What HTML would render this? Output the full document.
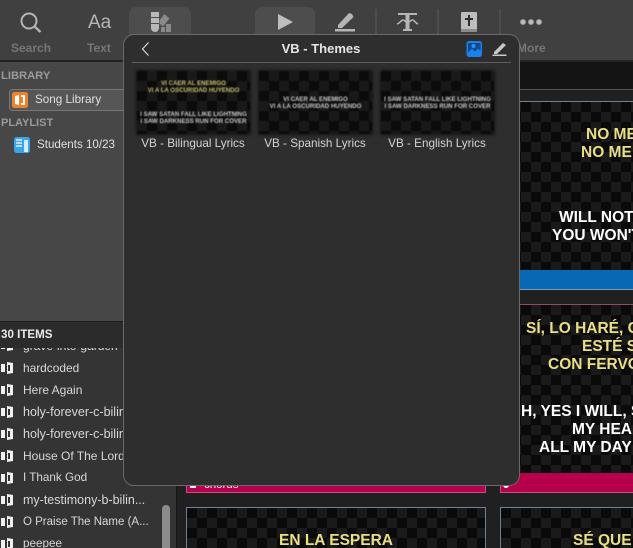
<!DOCTYPE html>
<html><head><meta charset="utf-8"><style>
*{box-sizing:border-box}
html,body{margin:0;padding:0;overflow:hidden}
body{width:633px;height:548px;overflow:hidden;background:#1e1e1e;position:relative;font-family:"Liberation Sans",sans-serif}
.a{position:absolute}
.t{position:absolute;white-space:nowrap}
.tb{font-size:12px;font-weight:bold;color:#767676;top:41px;line-height:15px}
.li{position:absolute;left:23px;font-size:12px;color:#d8d8d8;line-height:16px;white-space:nowrap}
.ck{position:absolute;background-color:#0a0a0a;background-image:conic-gradient(#1a1a1a 25%,#0a0a0a 0 50%,#1a1a1a 0 75%,#0a0a0a 0);background-size:20px 20px}
.s{position:absolute;white-space:nowrap;font-weight:bold;font-size:15.5px;line-height:18px}
.y{color:#ebdf85}.w{color:#fff}
.th{position:absolute;top:71px;width:113px;height:63px;box-shadow:0 0 3px 1px rgba(0,0,0,.55);background-color:#0b0b0b;background-image:conic-gradient(#191919 25%,#0b0b0b 0 50%,#191919 0 75%,#0b0b0b 0);background-size:20px 20px;overflow:hidden;filter:blur(.45px)}
.tt{position:absolute;left:0;width:113px;text-align:center;font-size:6.1px;line-height:7px;font-weight:bold;white-space:nowrap}
.lb{position:absolute;top:136px;width:130px;text-align:center;font-size:11.7px;line-height:16px;color:#d4d4d4;white-space:nowrap}
</style></head><body>

<!-- toolbar -->
<div class="a" style="left:0;top:0;width:633px;height:62px;background:#404040;border-bottom:2px solid #232323"></div>
<div class="a" style="left:129px;top:7px;width:62px;height:30px;background:#4d4d4d;border-radius:7px 7px 0 0"></div>
<div class="a" style="left:255px;top:7px;width:60px;height:30px;background:#4d4d4d;border-radius:7px 7px 0 0"></div>
<svg class="a" style="left:0;top:0" width="633" height="62">
 <g fill="none" stroke="#b5b5b5" stroke-width="2"><circle cx="29" cy="21" r="7.5"/><path d="M34.5 26.5L40.5 32" stroke-width="2.4"/></g>
 <g fill="#b8b8b8">
  <rect x="151" y="12" width="8" height="5"/><rect x="151" y="18" width="8" height="5"/><path d="M151 24h8v4a4 4 0 0 1-8 0z"/>
  <path d="M164.5 14l5 4.5-6.500 8-3.500-3v-3z" fill="#8a8a8a"/><rect x="166" y="24" width="5" height="8" fill="#8a8a8a"/><rect x="161" y="27" width="4" height="5" fill="#8a8a8a"/>
  <path d="M278 14l15 8-15 8z" fill="#bdbdbd"/>
  <path d="M338 25l11-12 3 1 1.500 3-11.500 11h-4z" fill="#b5b5b5"/><rect x="335" y="29" width="20" height="2.500" fill="#b5b5b5"/>
  <rect x="461" y="12" width="16" height="20" rx="1" fill="#bdbdbd"/><rect x="461" y="29" width="16" height="3" fill="#8d8d8d"/>
  <path d="M468 15h2v3h3v2h-3v6h-2v-6h-3v-2h3z" fill="#2e2e2e"/>
  <circle cx="523" cy="22" r="2.8"/><circle cx="531" cy="22" r="2.8"/><circle cx="539" cy="22" r="2.8"/>
 </g>
 <g fill="#b5b5b5"><rect x="398" y="13" width="19" height="2"/><rect x="405.500" y="13" width="4" height="18"/><rect x="403" y="29" width="9" height="2"/></g>
 <path d="M397 24c3-.5 4-4 6-4s3 3 4.500 3 3-3 5-3 3 3.500 5.500 4" fill="none" stroke="#b5b5b5" stroke-width="1.500"/>
 <g fill="#4e4e4e"><rect x="375" y="9" width="2" height="26"/><rect x="437" y="9" width="2" height="26"/><rect x="499" y="9" width="2" height="26"/></g>
</svg>
<div class="t" style="left:88px;top:12px;font-size:19px;color:#b5b5b5;line-height:22px">Aa</div>
<div class="t tb" style="left:11px">Search</div>
<div class="t tb" style="left:87px">Text</div>
<div class="t tb" style="left:517px">More</div>

<!-- sidebar -->
<div class="a" style="left:0;top:62px;width:176px;height:260px;background:#474747"></div>
<div class="t" style="left:1px;top:69px;font-size:11.200px;font-weight:bold;color:#9a9a9a;line-height:15px">LIBRARY</div>
<div class="a" style="left:9px;top:89px;width:130px;height:22px;background:#565656;border:1px solid #777;border-radius:3px"></div>
<svg class="a" style="left:12px;top:92px" width="17" height="17"><rect width="16" height="16" rx="2.500" fill="#f0822a"/><path d="M3 4l4-1v10l-4-1zM9 3h4v10H9z" fill="#fff"/><rect x="9" y="5" width="2" height="6" fill="#f0822a"/></svg>
<div class="t" style="left:35px;top:92px;font-size:11.700px;color:#e0e0e0;line-height:16px">Song Library</div>
<div class="t" style="left:1px;top:116px;font-size:11px;font-weight:bold;color:#9a9a9a;line-height:15px">PLAYLIST</div>
<svg class="a" style="left:14px;top:137px" width="17" height="17"><rect width="16" height="16" rx="2.500" fill="#3ba4ee"/><path d="M2 3h6M2 6h6M2 9h6" stroke="#fff" stroke-width="1.200"/><rect x="10" y="3" width="4" height="12" fill="#d7ecfb"/></svg>
<div class="t" style="left:37px;top:137px;font-size:11.600px;color:#e0e0e0;line-height:16px">Students 10/23</div>

<!-- list -->
<div class="a" style="left:0;top:322px;width:176px;height:226px;background:#343434"></div>
<div class="li" style="top:338px">grave-into-garden</div>
<div class="li" style="top:360px;font-size:11.900px">hardcoded</div>
<div class="li" style="top:382px">Here Again</div>
<div class="li" style="top:404px;font-size:12.500px">holy-forever-c-bilingual</div>
<div class="li" style="top:426px;font-size:12.500px">holy-forever-c-bilingual</div>
<div class="li" style="top:448px">House Of The Lord</div>
<div class="li" style="top:470px;font-size:11.700px">I Thank God</div>
<div class="li" style="top:492px;font-size:12.500px">my-testimony-b-bilin...</div>
<div class="li" style="top:514px;font-size:11.500px">O Praise The Name (A...</div>
<div class="li" style="top:536px;font-size:11.700px">peepee</div>
<svg class="a" style="left:0;top:340px" width="14" height="208"><g fill="#f0f0f0">
<path d="M1 1h4v8H1zM7-1l6 1v10l-6 1zM8 2v6h2V2z" fill-rule="evenodd"/>
<path transform="translate(0,23)" d="M1 1h4v8H1zM7-1l6 1v10l-6 1zM8 2v6h2V2z" fill-rule="evenodd"/>
<path transform="translate(0,45)" d="M1 1h4v8H1zM7-1l6 1v10l-6 1zM8 2v6h2V2z" fill-rule="evenodd"/>
<path transform="translate(0,67)" d="M1 1h4v8H1zM7-1l6 1v10l-6 1zM8 2v6h2V2z" fill-rule="evenodd"/>
<path transform="translate(0,89)" d="M1 1h4v8H1zM7-1l6 1v10l-6 1zM8 2v6h2V2z" fill-rule="evenodd"/>
<path transform="translate(0,111)" d="M1 1h4v8H1zM7-1l6 1v10l-6 1zM8 2v6h2V2z" fill-rule="evenodd"/>
<path transform="translate(0,133)" d="M1 1h4v8H1zM7-1l6 1v10l-6 1zM8 2v6h2V2z" fill-rule="evenodd"/>
<path transform="translate(0,155)" d="M1 1h4v8H1zM7-1l6 1v10l-6 1zM8 2v6h2V2z" fill-rule="evenodd"/>
<path transform="translate(0,177)" d="M1 1h4v8H1zM7-1l6 1v10l-6 1zM8 2v6h2V2z" fill-rule="evenodd"/>
<path transform="translate(0,199)" d="M1 1h4v8H1zM7-1l6 1v10l-6 1zM8 2v6h2V2z" fill-rule="evenodd"/>
</g></svg>
<div class="a" style="left:0;top:321px;width:176px;height:27px;background:#2b2b2b;border-top:1px solid #1c1c1c"></div>
<div class="t" style="left:1px;top:327px;font-size:11.600px;font-weight:bold;color:#e8e8e8;line-height:15px">30 ITEMS</div>
<div class="a" style="left:162px;top:505px;width:8px;height:43px;background:#8c8c8c;border-radius:4px 4px 0 0"></div>
<div class="a" style="left:176px;top:62px;width:1px;height:486px;background:#161616"></div>

<!-- main -->
<div class="a" style="left:177px;top:62px;width:456px;height:27px;background:#141414"></div>
<div class="a" style="left:177px;top:89px;width:456px;height:1px;background:#555"></div>
<div class="a" style="left:177px;top:90px;width:456px;height:458px;background:#202020"></div>

<div class="ck" style="left:500px;top:101px;width:133px;height:170px;border-top:1px solid #6b8299;border-left:1px solid #6b8299"></div>
<div class="a" style="left:500px;top:270px;width:133px;height:20px;background:#0868b4;border-bottom:1px solid #7d9cb8"></div>
<div class="s y" style="left:586px;top:126px">NO ME</div>
<div class="s y" style="left:581px;top:144px">NO ME</div>
<div class="s w" style="left:559px;top:209px">WILL NOT</div>
<div class="s w" style="left:552px;top:227px">YOU WON'T</div>

<div class="ck" style="left:500px;top:304px;width:133px;height:170px;border-top:1px solid #8a4f68;border-left:1px solid #8a4f68;overflow:hidden">
<div class="s y" style="left:25px;top:15px">SÍ, LO HARÉ, C</div>
<div class="s y" style="left:81px;top:33px">ESTÉ S</div>
<div class="s y" style="left:47px;top:51px">CON FERVO</div>
<div class="s w" style="left:20px;top:98px">H, YES I WILL, S</div>
<div class="s w" style="left:71px;top:116px">MY HEA</div>
<div class="s w" style="left:38px;top:134px">ALL MY DAY</div>
</div>
<div class="a" style="left:500px;top:473px;width:133px;height:20px;background:#b5004c;border-bottom:1px solid #c2527e;border-left:1px solid #c2527e"></div>
<div class="a" style="left:186px;top:473px;width:300px;height:20px;background:#b5004c;border-bottom:1px solid #c2527e;border-left:1px solid #c2527e;border-right:1px solid #c2527e"></div>
<div class="a" style="left:190px;top:482px;width:6px;height:6px;background:#f2f2f2"></div>
<div class="a" style="left:503px;top:482px;width:6px;height:6px;background:#f2f2f2;border-radius:3px"></div>
<div class="t" style="left:204px;top:478px;font-size:11.500px;line-height:14px;color:#f0f0f0">chorus</div>

<div class="ck" style="left:186px;top:507px;width:300px;height:41px;border:1px solid #6b8299;border-bottom:0"></div>
<div class="ck" style="left:500px;top:507px;width:133px;height:41px;border-top:1px solid #6b8299;border-left:1px solid #6b8299"></div>
<div class="s y" style="left:279px;top:532px">EN LA ESPERA</div>
<div class="s y" style="left:573px;top:532px">SÉ QUE</div>

<!-- modal -->
<div class="a" style="left:123px;top:34px;width:397px;height:452px;background:#2e2e2e;border:1.500px solid #6a6a6a;border-radius:11px"></div>
<div class="a" style="left:132px;top:62px;width:379px;height:1px;background:#5e5e5e"></div>
<svg class="a" style="left:140px;top:40px" width="12" height="18"><path d="M8.500 2.500L2.500 9l6 6.500" fill="none" stroke="#d6d6d6" stroke-width="1.200"/></svg>
<div class="t" style="left:221px;width:200px;text-align:center;top:41px;font-size:13px;font-weight:bold;color:#e6e6e6;line-height:16px">VB - Themes</div>
<svg class="a" style="left:466px;top:40px" width="17" height="18"><rect x=".5" y="1" width="15.500" height="16" rx="2.500" fill="#1a80ee"/><path d="M2 3h12.500v8L12 8.500l-3 3-3-3-4 4z" fill="#0e4a8c"/><circle cx="7.500" cy="6" r="2" fill="#2a93f5"/></svg>
<svg class="a" style="left:491px;top:41px" width="17" height="16"><path d="M3 11L12 2l3 2-9 9H3z" fill="#c8c8c8"/><rect x="1.500" y="13.500" width="14" height="1.500" fill="#c8c8c8"/></svg>

<div class="th" style="left:137px">
 <div class="tt" style="top:8.500px;color:#c9bd6c">VI CAER AL ENEMIGO</div>
 <div class="tt" style="top:15.500px;color:#c9bd6c">VI A LA OSCURIDAD HUYENDO</div>
 <div class="tt" style="top:39.500px;color:#c9c9c9">I SAW SATAN FALL LIKE LIGHTNING</div>
 <div class="tt" style="top:47px;color:#c9c9c9">I SAW DARKNESS RUN FOR COVER</div>
</div>
<div class="th" style="left:259px">
 <div class="tt" style="top:24.500px;color:#c9c9c9">VI CAER AL ENEMIGO</div>
 <div class="tt" style="top:31.500px;color:#c9c9c9">VI A LA OSCURIDAD HUYENDO</div>
</div>
<div class="th" style="left:381px">
 <div class="tt" style="top:24.500px;color:#c9c9c9">I SAW SATAN FALL LIKE LIGHTNING</div>
 <div class="tt" style="top:31.500px;color:#c9c9c9">I SAW DARKNESS RUN FOR COVER</div>
</div>
<div class="lb" style="left:128px">VB - Bilingual Lyrics</div>
<div class="lb" style="left:250px">VB - Spanish Lyrics</div>
<div class="lb" style="left:372px">VB - English Lyrics</div>
</body></html>
